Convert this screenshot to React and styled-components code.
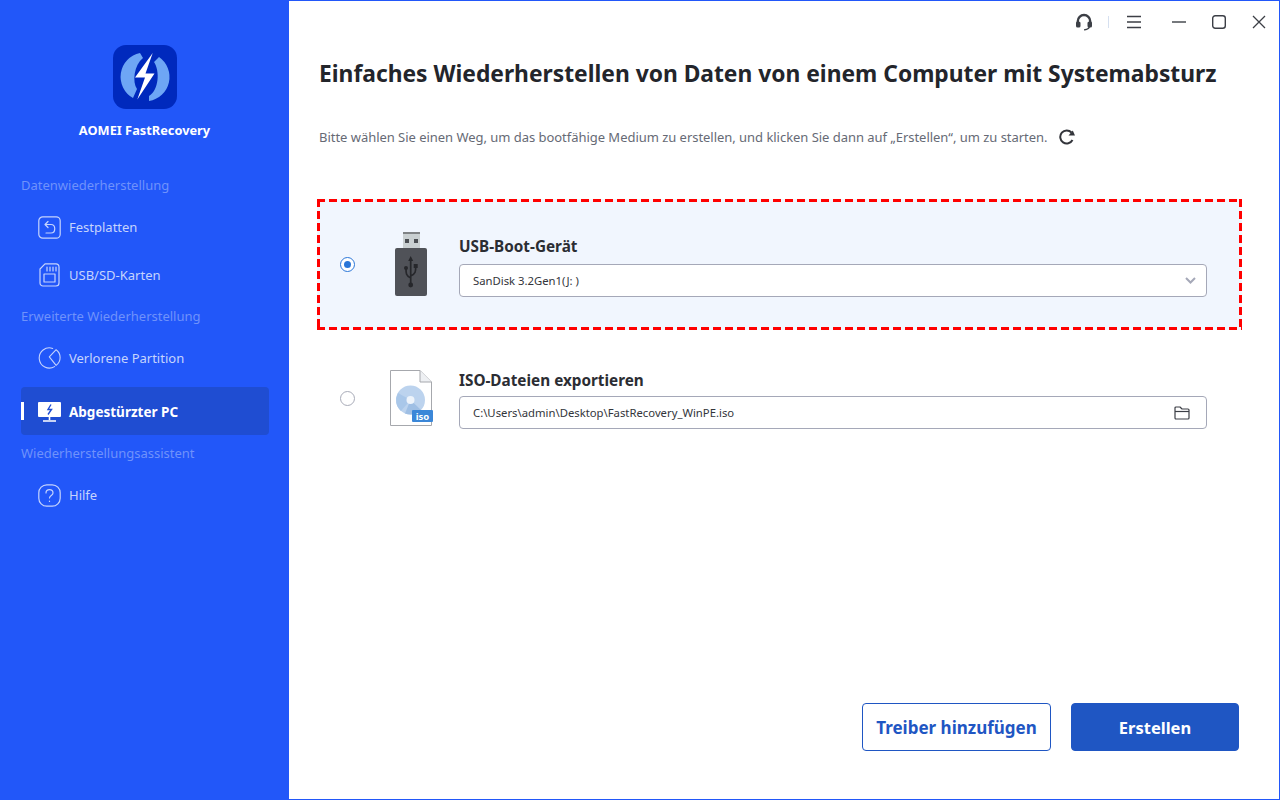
import React from 'react'
import styled, { createGlobalStyle } from 'styled-components'

const Global = createGlobalStyle`
  html, body { margin: 0; padding: 0; background: #fff; }
  * { box-sizing: border-box; }
  body { font-family: "Noto Sans", "Open Sans", sans-serif; }
`

const Window = styled.div`
  display: flex;
  width: 1280px;
  height: 800px;
  overflow: hidden;
  background: #fff;
`

const Sidebar = styled.aside`
  width: 289px;
  flex: none;
  background: #2257f9;
  padding-top: 45px;
`

const Brand = styled.div`
  display: flex;
  flex-direction: column;
  align-items: center;
  gap: 12px;
  margin-bottom: 29px;
`

const BrandName = styled.div`
  color: #fff;
  font-size: 12.8px;
  line-height: 18px;
  font-weight: 700;
`

const GroupLabel = styled.div`
  height: 35px;
  padding: 8px 0 0 21px;
  color: #6f92fb;
  font-size: 13px;
  line-height: 18px;
`

const Item = styled.div`
  position: relative;
  display: flex;
  align-items: center;
  gap: 8px;
  width: 248px;
  height: 48px;
  margin: ${p => (p.$active ? '5px 0 1px 21px' : '0 0 0 21px')};
  padding: ${p => (p.$active ? '1px 0 0 17px' : '0 0 0 17px')};
  border-radius: 4px;
  background: ${p => (p.$active ? '#1f4dd2' : 'transparent')};
  color: ${p => (p.$active ? '#fff' : '#c6d4fd')};
  font-size: ${p => (p.$active ? '13.5px' : '13px')};
  font-weight: ${p => (p.$active ? 700 : 400)};

  &::before {
    content: '';
    display: ${p => (p.$active ? 'block' : 'none')};
    position: absolute;
    left: 0;
    top: 15px;
    width: 3px;
    height: 18px;
    background: #fff;
  }
`

const ItemIcon = styled.span`
  display: flex;
  align-items: center;
  justify-content: center;
  width: 23px;
  height: 26px;
`

const Main = styled.main`
  flex: 1;
  display: flex;
  flex-direction: column;
  border: 1px solid #2257f9;
  border-left: 0;
  padding-left: 30px;
`

const TitleBar = styled.div`
  display: flex;
  align-items: center;
  justify-content: flex-end;
  height: 39px;
  padding: 2px 11px 0 0;
  color: #3c3f46;
`

const BarIcon = styled.span`
  display: flex;
  align-items: center;
  justify-content: center;
  width: 18px;
  height: 18px;
  margin-left: ${p => p.$gap}px;
`

const Divider = styled.span`
  width: 1px;
  height: 12px;
  margin-left: 15px;
  background: #d6e0f0;
`

const Title = styled.h1`
  margin: 19px 0 0;
  color: #23252b;
  font-size: 22.8px;
  line-height: 30px;
  font-weight: 700;
  white-space: nowrap;
`

const Subtitle = styled.div`
  display: flex;
  align-items: center;
  gap: 10px;
  margin-top: 37px;
  height: 22px;
  color: #666a75;
  font-size: 13px;
  letter-spacing: -0.035px;
`

const Option = styled.div`
  display: grid;
  grid-template-columns: 60px 82px 748px;
  align-items: center;
  width: 925px;
  height: 131px;
  margin: ${p => p.$top}px 0 0 -2px;
  ${p =>
    p.$selected &&
    `
    background:
      linear-gradient(90deg, #f00 8px, transparent 8px) 0 0 / 12px 3px repeat-x,
      linear-gradient(90deg, #f00 8px, transparent 8px) 0 100% / 12px 3px repeat-x,
      linear-gradient(180deg, #f00 8px, transparent 8px) 0 0 / 3px 12px repeat-y,
      linear-gradient(180deg, #f00 8px, transparent 8px) 100% 0 / 3px 12px repeat-y,
      #f1f6fe;
  `}
`

const Radio = styled.span`
  justify-self: end;
  margin-right: 22px;
  display: flex;
  align-items: center;
  justify-content: center;
  width: 15px;
  height: 15px;
  border-radius: 50%;
  border: 1px solid ${p => (p.$on ? '#2a76d8' : '#a8abb8')};
  background: #fff;

  &::after {
    content: '';
    display: ${p => (p.$on ? 'block' : 'none')};
    width: 7px;
    height: 7px;
    border-radius: 50%;
    background: #2a76d8;
  }
`

const Media = styled.div`
  display: flex;
  justify-content: center;
  padding-right: 14px;
`

const Fields = styled.div`
  display: flex;
  flex-direction: column;
  gap: ${p => p.$gap}px;
  padding-top: ${p => p.$pad}px;
`

const FieldLabel = styled.div`
  color: #2b2d33;
  font-size: 15.3px;
  line-height: 20px;
  font-weight: 700;
`

const Field = styled.div`
  display: flex;
  align-items: center;
  justify-content: space-between;
  height: 33px;
  padding: 0 ${p => p.$pad}px 0 13px;
  border: 1px solid #a5a8b8;
  border-radius: 4px;
  background: #fff;
  color: #33353b;
  font-size: 11.3px;
`

const Footer = styled.div`
  display: flex;
  justify-content: flex-end;
  gap: 20px;
  margin-top: auto;
  padding: 0 40px 48px 0;
`

const Button = styled.button`
  height: 48px;
  width: ${p => p.$w}px;
  padding: 1px 0 0;
  border-radius: 4px;
  border: 1px solid #1f56c3;
  background: ${p => (p.$primary ? '#1f56c3' : '#fff')};
  color: ${p => (p.$primary ? '#fff' : '#1f56c3')};
  font-family: inherit;
  font-size: ${p => (p.$primary ? '16.5px' : '17px')};
  font-weight: 700;
`

const Logo = () => (
  <svg width="64" height="64" viewBox="0 0 64 64">
    <rect width="64" height="64" rx="13" fill="#0029bd" />
    <path d="M27 8 A24.3 24.3 0 0 0 20 53 L24 44 C19 37 21 20 30 13 Z" fill="#6ea6f5" />
    <path d="M36 56 A24.3 24.3 0 0 0 46 12 L41 17 C47 26 46 45 36 51 Z" fill="#6ea6f5" />
    <path d="M39.7 8 L22 32.5 H32 L24.3 54.5 L41.5 28.5 H32.5 Z" fill="#fff" />
  </svg>
)

const stroke = { fill: 'none', stroke: 'currentColor', strokeWidth: 1.2, strokeLinecap: 'round', strokeLinejoin: 'round' }

const DiskIcon = () => (
  <svg width="23" height="23" viewBox="0 0 23 23" {...stroke}>
    <rect x=".8" y=".8" width="21.4" height="21.4" rx="4" />
    <path d="M10 5.5 L7 8.5 L10 11.5 M7 8.5 H13 C18 8.5 18 17 13 17 H8" />
  </svg>
)

const CardIcon = () => (
  <svg width="21" height="24" viewBox="0 0 21 24" {...stroke}>
    <path d="M6 .8 H17 A3 3 0 0 1 20 4 V20 A3 3 0 0 1 17 23 H4 A3 3 0 0 1 1 20 V6 Z" />
    <rect x="5" y="11" width="11" height="8" />
    <path d="M8 4 V8 M11 4 V8 M14 4 V8 M17 4 V8" />
  </svg>
)

const PartitionIcon = () => (
  <svg width="25" height="24" viewBox="0 0 25 24" {...stroke}>
    <path d="M16 1.6 A11 11 0 1 0 18 21.4" />
    <path d="M19.7 3 L12.3 10.7 L19.7 20 A10.5 10.5 0 0 0 19.7 3 Z" />
  </svg>
)

const CrashIcon = () => (
  <svg width="23" height="20" viewBox="0 0 23 20">
    <rect width="23" height="15" rx="1" fill="#fff" />
    <path d="M11.5 15 V18 M5 19 H18" stroke="#fff" strokeWidth="1.6" />
    <path d="M13 2.5 L10 7.5 H13.5 L10 12.5" fill="none" stroke="#1f4dd2" strokeWidth="1.4" />
  </svg>
)

const HelpIcon = () => (
  <svg width="23" height="23" viewBox="0 0 23 23" {...stroke}>
    <rect x=".8" y=".8" width="21.4" height="21.4" rx="8" />
    <path d="M8 9 C8 4.5 15 4.5 15 9 C15 11.5 11.5 11.5 11.5 14" />
    <path d="M11.5 17 V17.4" />
  </svg>
)

const UsbStick = () => (
  <svg width="32" height="65" viewBox="0 0 32 65">
    <rect x="8" y="0" width="17" height="18" fill="#c9cfd1" />
    <rect x="8" y="0" width="17" height="2" fill="#7f8285" />
    <rect x="10" y="7" width="4" height="4" fill="#4b4e53" />
    <rect x="19" y="7" width="4" height="4" fill="#4b4e53" />
    <rect x="0" y="16" width="32" height="48" rx="2" fill="#505258" />
    <path d="M15.7 27 V52 M15.7 46 C11 44 11 41 11 37 M15.7 44 C20.7 42 20.7 39 20.7 35" fill="none" stroke="#26272b" strokeWidth="1.7" />
    <path d="M15.7 24 L13.2 29 H18.2 Z" fill="#26272b" />
    <circle cx="11" cy="36" r="2" fill="#26272b" />
    <rect x="18.7" y="32" width="4" height="4" fill="#26272b" />
    <circle cx="15.7" cy="53" r="2.4" fill="#26272b" />
  </svg>
)

const IsoFile = () => (
  <svg width="43" height="57" viewBox="0 0 43 57">
    <path d="M.5 .5 H30 L41.5 12 V55.5 H.5 Z" fill="#fff" stroke="#a6a8ad" />
    <path d="M30 .5 V12 H41.5" fill="#eef0f3" stroke="#a6a8ad" />
    <circle cx="20.5" cy="30" r="14.5" fill="#bcd3ee" />
    <path d="M20.5 30 L8 23 A14.5 14.5 0 0 0 11 41 Z" fill="#a9c7e9" />
    <path d="M20.5 30 L31 40 A14.5 14.5 0 0 1 15 43.5 Z" fill="#9fbfe4" />
    <circle cx="20.5" cy="30" r="4" fill="#eef4fb" />
    <rect x="22" y="40" width="21" height="12" rx="1" fill="#3b87d8" />
    <text x="32.5" y="49.5" textAnchor="middle" fill="#fff" fontSize="9.5" fontWeight="700" fontFamily="Noto Sans, sans-serif">iso</text>
  </svg>
)

const Headset = () => (
  <svg width="18" height="18" viewBox="0 0 18 18">
    <path d="M2.8 10 V8.2 A6.2 6.2 0 0 1 15.2 8.2 V10" fill="none" stroke="currentColor" strokeWidth="2.4" />
    <rect x="1" y="8.5" width="4.5" height="6" rx="1.6" fill="currentColor" />
    <rect x="12.5" y="8.5" width="4.5" height="6" rx="1.6" fill="currentColor" />
    <path d="M14.5 14 C13.5 16 11 16.8 9 16.8" fill="none" stroke="currentColor" strokeWidth="1.3" />
  </svg>
)

const Burger = () => (
  <svg width="16" height="14" viewBox="0 0 16 14" stroke="currentColor" strokeWidth="1.3">
    <path d="M1 1.5 H15 M1 7 H15 M1 12.5 H15" />
  </svg>
)

const Minimize = () => (
  <svg width="14" height="14" viewBox="0 0 14 14" stroke="currentColor" strokeWidth="1.4">
    <path d="M0 7 H14" />
  </svg>
)

const Maximize = () => (
  <svg width="14" height="14" viewBox="0 0 14 14" fill="none" stroke="currentColor" strokeWidth="1.4">
    <rect x=".7" y=".7" width="12.6" height="12.6" rx="2.5" />
  </svg>
)

const Close = () => (
  <svg width="14" height="14" viewBox="0 0 14 14" stroke="currentColor" strokeWidth="1.3">
    <path d="M1 1 L13 13 M13 1 L1 13" />
  </svg>
)

const Reload = () => (
  <svg width="18" height="16" viewBox="0 0 18 16">
    <path d="M14.5 11 A6.5 6.5 0 1 1 13.5 3.5" fill="none" stroke="#33353b" strokeWidth="2" />
    <path d="M10.5 6.5 H17 L14.8 1.5 Z" fill="#33353b" />
  </svg>
)

const Chevron = () => (
  <svg width="11" height="7" viewBox="0 0 11 7" fill="none" stroke="#a5a8b8" strokeWidth="2">
    <path d="M1 1 L5.5 5.5 L10 1" />
  </svg>
)

const Folder = () => (
  <svg width="16" height="14" viewBox="0 0 16 14" fill="none" stroke="#3c3f46" strokeWidth="1.2" strokeLinejoin="round">
    <path d="M1 12 V2 A1 1 0 0 1 2 1 H6 L8 3 H14 A1 1 0 0 1 15 4 V12 A1 1 0 0 1 14 13 H2 A1 1 0 0 1 1 12 Z" />
    <path d="M1 5.5 H15" />
  </svg>
)

const navItem = (Icon, label, active) => (
  <Item $active={active}>
    <ItemIcon><Icon /></ItemIcon>
    {label}
  </Item>
)

export default function App() {
  return (
    <Window>
      <Global />
      <Sidebar>
        <Brand>
          <Logo />
          <BrandName>AOMEI FastRecovery</BrandName>
        </Brand>
        <GroupLabel>Datenwiederherstellung</GroupLabel>
        {navItem(DiskIcon, 'Festplatten')}
        {navItem(CardIcon, 'USB/SD-Karten')}
        <GroupLabel>Erweiterte Wiederherstellung</GroupLabel>
        {navItem(PartitionIcon, 'Verlorene Partition')}
        {navItem(CrashIcon, 'Abgestürzter PC', true)}
        <GroupLabel>Wiederherstellungsassistent</GroupLabel>
        {navItem(HelpIcon, 'Hilfe')}
      </Sidebar>
      <Main>
        <TitleBar>
          <BarIcon><Headset /></BarIcon>
          <Divider />
          <BarIcon $gap={16}><Burger /></BarIcon>
          <BarIcon $gap={27}><Minimize /></BarIcon>
          <BarIcon $gap={22}><Maximize /></BarIcon>
          <BarIcon $gap={22}><Close /></BarIcon>
        </TitleBar>
        <Title>Einfaches Wiederherstellen von Daten von einem Computer mit Systemabsturz</Title>
        <Subtitle>
          Bitte wählen Sie einen Weg, um das bootfähige Medium zu erstellen, und klicken Sie dann auf „Erstellen“, um zu starten.
          <Reload />
        </Subtitle>
        <Option $selected $top={51}>
          <Radio $on />
          <Media><UsbStick /></Media>
          <Fields $gap={8} $pad={3}>
            <FieldLabel>USB-Boot-Gerät</FieldLabel>
            <Field $pad={10}>SanDisk 3.2Gen1(J: )<Chevron /></Field>
          </Fields>
        </Option>
        <Option $top={3}>
          <Radio />
          <Media><IsoFile /></Media>
          <Fields $gap={6} $pad={2}>
            <FieldLabel>ISO-Dateien exportieren</FieldLabel>
            <Field $pad={16}>C:\Users\admin\Desktop\FastRecovery_WinPE.iso<Folder /></Field>
          </Fields>
        </Option>
        <Footer>
          <Button $w={189}>Treiber hinzufügen</Button>
          <Button $primary $w={168}>Erstellen</Button>
        </Footer>
      </Main>
    </Window>
  )
}
